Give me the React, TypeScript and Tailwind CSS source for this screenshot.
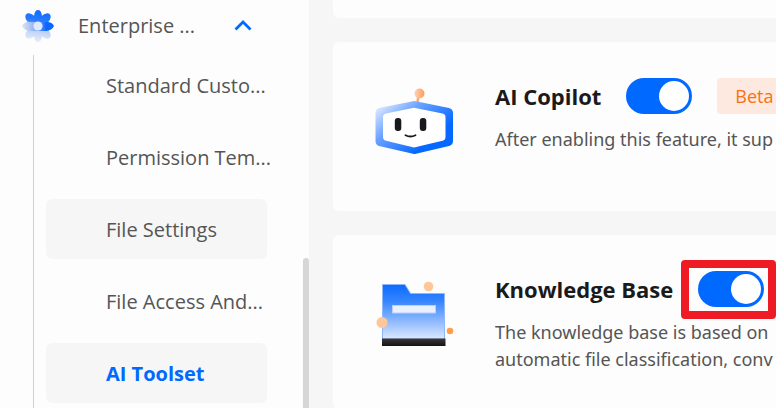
import { useState } from 'react'
import type { ReactNode } from 'react'

interface MenuItem {
  id: string
  label: string
  hovered?: boolean
}

interface Tool {
  id: string
  name: string
  lines: string[]
  icon: ReactNode
  beta?: boolean
  marked?: boolean
}

const menuItems: MenuItem[] = [
  { id: 'standard', label: 'Standard Custo...' },
  { id: 'permission', label: 'Permission Tem...' },
  { id: 'file-settings', label: 'File Settings', hovered: true },
  { id: 'file-access', label: 'File Access And...' },
  { id: 'ai-toolset', label: 'AI Toolset' }
]

function FlowerIcon() {
  return (
    <svg className="size-8 shrink-0" viewBox="0 0 32 32" aria-hidden="true">
      <defs>
        <linearGradient id="flower" gradientUnits="userSpaceOnUse" x1="18" y1="4" x2="14" y2="30">
          <stop offset="0" stopColor="#1670ff" />
          <stop offset="0.28" stopColor="#2b7cff" />
          <stop offset="0.55" stopColor="#b4cbf6" />
          <stop offset="1" stopColor="#e3e9f6" />
        </linearGradient>
        <linearGradient id="petal" gradientUnits="userSpaceOnUse" x1="0" y1="16" x2="32" y2="16">
          <stop offset="0" stopColor="#dfe5f1" />
          <stop offset="0.5" stopColor="#79a6f6" />
          <stop offset="0.75" stopColor="#0b68ff" />
        </linearGradient>
        <clipPath id="petals">
          <ellipse cx="16" cy="7" rx="4" ry="7" />
          <ellipse cx="16" cy="25" rx="4" ry="7" />
          {[45, 135, 225, 315].map((angle) => (
            <ellipse key={angle} cx="16" cy="6.500" rx="4.500" ry="7.200" transform={`rotate(${angle} 16 16)`} />
          ))}
          <circle cx="16" cy="16" r="11" />
        </clipPath>
      </defs>
      <rect width="32" height="32" fill="url(#flower)" clipPath="url(#petals)" />
      <path d="M0 16 Q2 11.500 8 12 L24 12 Q30 11.500 32 16 Q30 20.500 24 21 L8 21 Q2 20.500 0 16 Z" fill="url(#petal)" />
      <circle cx="16" cy="16" r="4.600" fill="#dfe9ff" />
    </svg>
  )
}

function RobotIcon() {
  return (
    <svg className="h-20 w-20 shrink-0" viewBox="0 0 80 80" aria-hidden="true">
      <defs>
        <linearGradient id="frame" x1="0" y1="0.15" x2="0.85" y2="0.85">
          <stop offset="0" stopColor="#dce9ff" />
          <stop offset="0.35" stopColor="#6ba2ff" />
          <stop offset="0.85" stopColor="#0568ff" />
        </linearGradient>
        <linearGradient id="antenna" x1="0" y1="0" x2="1" y2="0">
          <stop offset="0" stopColor="#ffd3b3" />
          <stop offset="1" stopColor="#ff9c5e" />
        </linearGradient>
      </defs>
      <path d="M43.500 16 L42.500 25" stroke="#ffa56c" strokeWidth="2.500" />
      <circle cx="44.500" cy="15.500" r="5" fill="url(#antenna)" />
      <path
        d="M38 23.200 Q39.500 22.700 41 23.200 L74 30 Q78 31 78 35 L78 63 Q78 67 74 68 L41 75.800 Q39.500 76.200 38 75.800 L4 68 Q0.500 67 0.500 63 L0.500 35 Q0.500 31 4 30 Z"
        fill="url(#frame)"
      />
      <path
        d="M39 29.800 L67.500 35.500 Q70.500 36.200 70.500 39 L70.500 59 Q70.500 62 67.500 62.700 L39 69.500 L11 62.700 Q8 62 8 59 L8 39 Q8 36.200 11 35.500 Z"
        fill="#ffffff"
      />
      <rect x="19.800" y="40" width="6.500" height="13" rx="3" fill="#17191c" />
      <rect x="44.800" y="40" width="6.500" height="13" rx="3" fill="#17191c" />
      <path d="M30.500 57.200 Q35.500 59.800 40.500 57.200" fill="none" stroke="#17191c" strokeWidth="1.800" strokeLinecap="round" />
    </svg>
  )
}

function FolderIcon() {
  return (
    <svg className="h-20 w-20 shrink-0" viewBox="0 0 80 80" aria-hidden="true">
      <defs>
        <linearGradient id="folder" x1="0" y1="0" x2="0" y2="1">
          <stop offset="0" stopColor="#0a6bff" />
          <stop offset="0.3" stopColor="#3584ff" />
          <stop offset="1" stopColor="#dce8ff" />
        </linearGradient>
        <linearGradient id="base" x1="0" y1="0" x2="0" y2="1">
          <stop offset="0" stopColor="#3a3a3a" />
          <stop offset="1" stopColor="#141414" />
        </linearGradient>
      </defs>
      <path d="M7.500 13.500 H30 L35.500 22.500 H69.500 V68 H7.500 Z" fill="url(#folder)" stroke="#8fb6fa" />
      <rect x="7" y="67.500" width="63.500" height="7.500" fill="url(#base)" />
      <rect x="17.500" y="34.500" width="43" height="7.500" fill="#eaf0fd" stroke="#b9d0fa" />
      <circle cx="53.500" cy="15.500" r="4.800" fill="#ffc799" />
      <circle cx="7" cy="51.500" r="5.500" fill="#ffc799" />
      <circle cx="75" cy="60" r="3.300" fill="#ff9f4d" />
    </svg>
  )
}

const tools: Tool[] = [
  {
    id: 'copilot',
    name: 'AI Copilot',
    lines: ['After enabling this feature, it sup'],
    icon: <RobotIcon />,
    beta: true
  },
  {
    id: 'knowledge',
    name: 'Knowledge Base',
    lines: ['The knowledge base is based on', 'automatic file classification, conv'],
    icon: <FolderIcon />,
    marked: true
  }
]

export default function AiToolsetPage() {
  const [expanded, setExpanded] = useState(true)
  const [selected, setSelected] = useState('ai-toolset')
  const [enabled, setEnabled] = useState<{ [key: string]: boolean }>({
    copilot: true,
    knowledge: true
  })

  return (
    <div className="flex h-screen overflow-hidden bg-[#f6f6f6] font-['Open_Sans','Noto_Sans',sans-serif] text-[#555555]">
      {/* Sidebar */}
      <nav className="flex w-[309px] shrink-0 bg-[#fdfdfd]">
        <div className="flex min-w-0 flex-1 flex-col">
          <button
            type="button"
            onClick={() => setExpanded(!expanded)}
            aria-expanded={expanded}
            className="flex h-[55px] w-full shrink-0 items-center pr-[51px] pb-1 pl-[22px] text-xl"
          >
            <FlowerIcon />
            <span className="ml-6 flex-1 text-left whitespace-nowrap">Enterprise ...</span>
            <svg className="h-3 w-[18px] shrink-0" viewBox="0 0 18 12" fill="none" aria-hidden="true">
              <path d="M1.500 9.500 L9 2 L16.500 9.500" stroke="#0069ff" strokeWidth="2.800" />
            </svg>
          </button>
          {expanded && (
            <ul className="ml-[33px] flex flex-1 flex-col gap-3 border-l border-[#d0d0d0] pr-9 pl-3">
              {menuItems.map((item) => (
                <li key={item.id}>
                  <a
                    href={`#${item.id}`}
                    onClick={() => setSelected(item.id)}
                    className={`flex h-[60px] items-center rounded-md pt-0.5 pl-[60px] text-xl whitespace-nowrap ${
                      item.hovered || selected === item.id ? 'bg-[#f6f6f6]' : ''
                    } ${selected === item.id ? 'font-bold text-[#0069ff]' : ''}`}
                  >
                    {item.label}
                  </a>
                </li>
              ))}
            </ul>
          )}
        </div>
        <div className="flex w-1.5 flex-col pt-[258px]">
          <div className="flex-1 rounded-t-full bg-[#d6d6d6]"></div>
        </div>
      </nav>

      {/* Tool cards */}
      <main className="flex min-w-0 flex-1 flex-col gap-6 overflow-hidden pl-6">
        <div className="h-[18px] shrink-0 rounded-bl-md bg-[#fdfdfd]"></div>
        {tools.map((tool) => (
          <section
            key={tool.id}
            className="flex min-h-[169px] shrink-0 items-start gap-10 rounded-l-md bg-[#fdfdfd] pt-9 pb-9 pl-[42px]"
          >
            {tool.icon}
            <div className="min-w-0 flex-1 whitespace-nowrap">
              <div className="flex items-center gap-[25px]">
                <h2 id={tool.id} className="text-[22px] leading-9 font-bold text-[#1a1a1a]">
                  {tool.name}
                </h2>
                <span className="relative flex shrink-0">
                  <input
                    type="checkbox"
                    role="switch"
                    aria-labelledby={tool.id}
                    checked={enabled[tool.id]}
                    onChange={(e) => setEnabled({ ...enabled, [tool.id]: e.target.checked })}
                    className="h-9 w-[66px] appearance-none rounded-full bg-[#c4c4c4] p-[3px] before:block before:size-[30px] before:rounded-full before:bg-white checked:bg-[#0069ff] checked:before:ml-[30px]"
                  />
                  {tool.marked && (
                    <span className="pointer-events-none absolute -top-[11px] -right-3 -bottom-3 -left-[17px] rounded border-8 border-[#ee1b24]"></span>
                  )}
                </span>
                {tool.beta && (
                  <span className="h-9 shrink-0 rounded bg-[#fde9e0] px-[18px] text-lg leading-9 text-[#fa7014]">
                    Beta
                  </span>
                )}
              </div>
              <p className="mt-3 font-['Noto_Sans',sans-serif] text-lg leading-[27px]">
                {tool.lines.map((line) => (
                  <span key={line} className="block">
                    {line}
                  </span>
                ))}
              </p>
            </div>
          </section>
        ))}
      </main>
    </div>
  )
}
